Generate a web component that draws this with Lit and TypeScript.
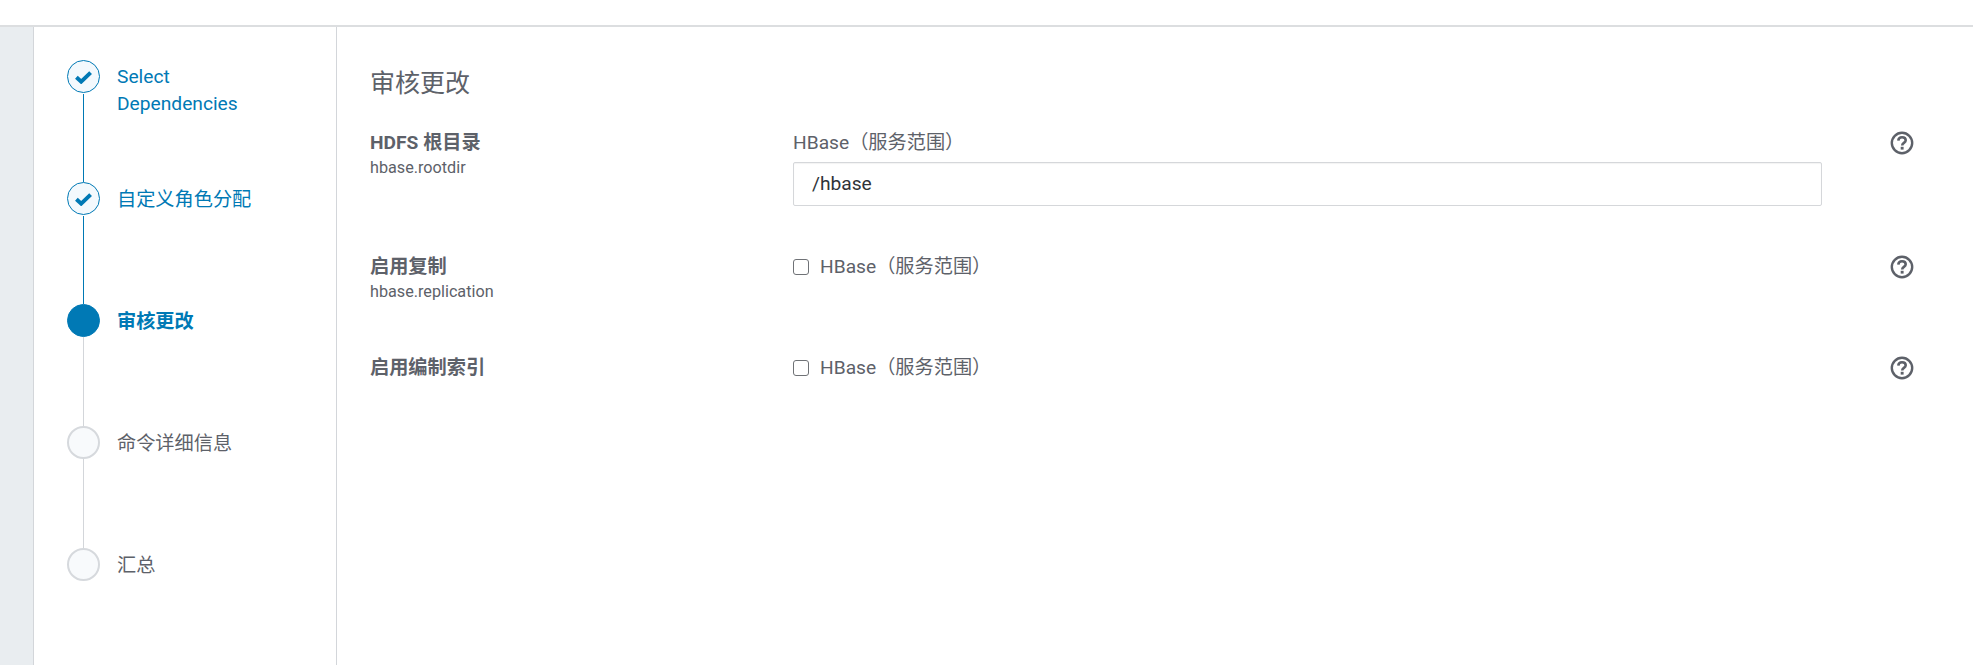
import { LitElement, html, css, nothing } from "lit";
import { customElement } from "lit/decorators.js";

const steps = [
  { label: "Select Dependencies", state: "done", latin: true },
  { label: "自定义角色分配", state: "done" },
  { label: "审核更改", state: "active" },
  { label: "命令详细信息", state: "todo" },
  { label: "汇总", state: "todo" },
];

const rows = [
  { name: "HDFS 根目录", key: "hbase.rootdir", input: "/hbase" },
  { name: "启用复制", key: "hbase.replication" },
  { name: "启用编制索引", key: "" },
];

@customElement("app-root")
export class AppRoot extends LitElement {
  static styles = css`
    :host { display: block; height: 665px; overflow: hidden; background: #fff; color: #5d6169;
      font-family: Roboto, "Noto Sans CJK SC", sans-serif; font-size: 19.2px; }
    .top { height: 25px; border-bottom: 2px solid #dcdee0; }
    .body { display: flex; height: 638px; }
    .gutter { width: 33px; background: #e9edf0; border-right: 1px solid #d3d6da; flex: none; }
    .side { width: 270px; flex: none; border-right: 1px solid #d3d6da; padding: 33px 0 0 32px; }
    .step { display: flex; height: 122px; gap: 16px; }
    .marker { width: 35px; flex: none; display: flex; flex-direction: column; align-items: center; }
    .circle { width: 33px; height: 33px; box-sizing: border-box; border-radius: 50%; flex: none;
      border: 1px solid #0079b5; background: #f3f9fd; display: flex; align-items: center; justify-content: center; }
    .line { width: 1px; flex: 1; margin-top: 1px; background: #0079b5; }
    .active .circle { background: #0079b5; }
    .active .line, .todo .line { background: #d3d6da; margin-top: 0; }
    .todo .circle { border: 2px solid #d6d9dd; background: #f8fafc; }
    .text { line-height: 27px; width: 150px; color: #5d6169; padding-top: 4px; }
    .text.latin { padding-top: 3px; }
    .done .text, .active .text { color: #0079b5; }
    .active .text { font-weight: 700; }
    .main { flex: 1; padding: 0 33px; min-width: 0; }
    h1 { margin: 0; font-size: 25px; font-weight: 400; line-height: 30px; padding-top: 42px; color: #5d6169; }
    .row { display: grid; grid-template-columns: 423px 1029px 1fr; }
    .r0 { margin-top: 32px; height: 124px; }
    .r1 { height: 101px; }
    .name { font-weight: 700; line-height: 24px; }
    .key { font-size: 16.2px; line-height: 26px; }
    .scope { line-height: 24px; display: flex; align-items: center; gap: 11px; }
    .cb { width: 16px; height: 16px; box-sizing: border-box; border: 1px solid #6f7276; border-radius: 3px; flex: none; }
    .field { box-sizing: border-box; height: 44px; margin-top: 7px; border: 1px solid #d5d7da; border-radius: 2px;
      line-height: 42px; padding-left: 18px; color: #2f3338; box-shadow: inset 0 1px 1px rgba(0,0,0,.05); }
    .help { margin-left: 68px; display: block; }
  `;

  render() {
    return html`
      <div class="top"></div>
      <div class="body">
        <div class="gutter"></div>
        <nav class="side">
          ${steps.map((s, i) => html`
            <div class="step ${s.state}">
              <div class="marker">
                <div class="circle">
                  ${s.state === "done" ? html`<svg width="17" height="14" viewBox="0 0 17 14"><path d="M1.4 7.2 6.2 11.6 15.6 2.6" fill="none" stroke="#0079b5" stroke-width="4"/></svg>` : nothing}
                </div>
                ${i < steps.length - 1 ? html`<div class="line"></div>` : nothing}
              </div>
              <div class="text ${s.latin ? "latin" : ""}">${s.label}</div>
            </div>`)}
        </nav>
        <main class="main">
          <h1>审核更改</h1>
          ${rows.map((r, i) => html`
            <div class="row ${i === 0 ? "r0" : "r1"}">
              <div>
                <div class="name">${r.name}</div>
                ${r.key ? html`<div class="key">${r.key}</div>` : nothing}
              </div>
              <div>
                <div class="scope">${r.input ? nothing : html`<span class="cb"></span>`}<span>HBase（服务范围）</span></div>
                ${r.input ? html`<div class="field">${r.input}</div>` : nothing}
              </div>
              <svg class="help" width="24" height="24" viewBox="0 0 24 24">
                <circle cx="12" cy="12" r="10.2" fill="none" stroke="#5d6169" stroke-width="2.4"/>
                <path d="M8.3 9.6C8.5 7.3 10 6.2 12 6.2c2.2 0 3.7 1.2 3.7 3 0 2.8-3.5 2.6-3.5 5.2" fill="none" stroke="#5d6169" stroke-width="2.6"/>
                <rect x="10.7" y="15.8" width="2.9" height="2.8" fill="#5d6169"/>
              </svg>
            </div>`)}
        </main>
      </div>
    `;
  }
}
